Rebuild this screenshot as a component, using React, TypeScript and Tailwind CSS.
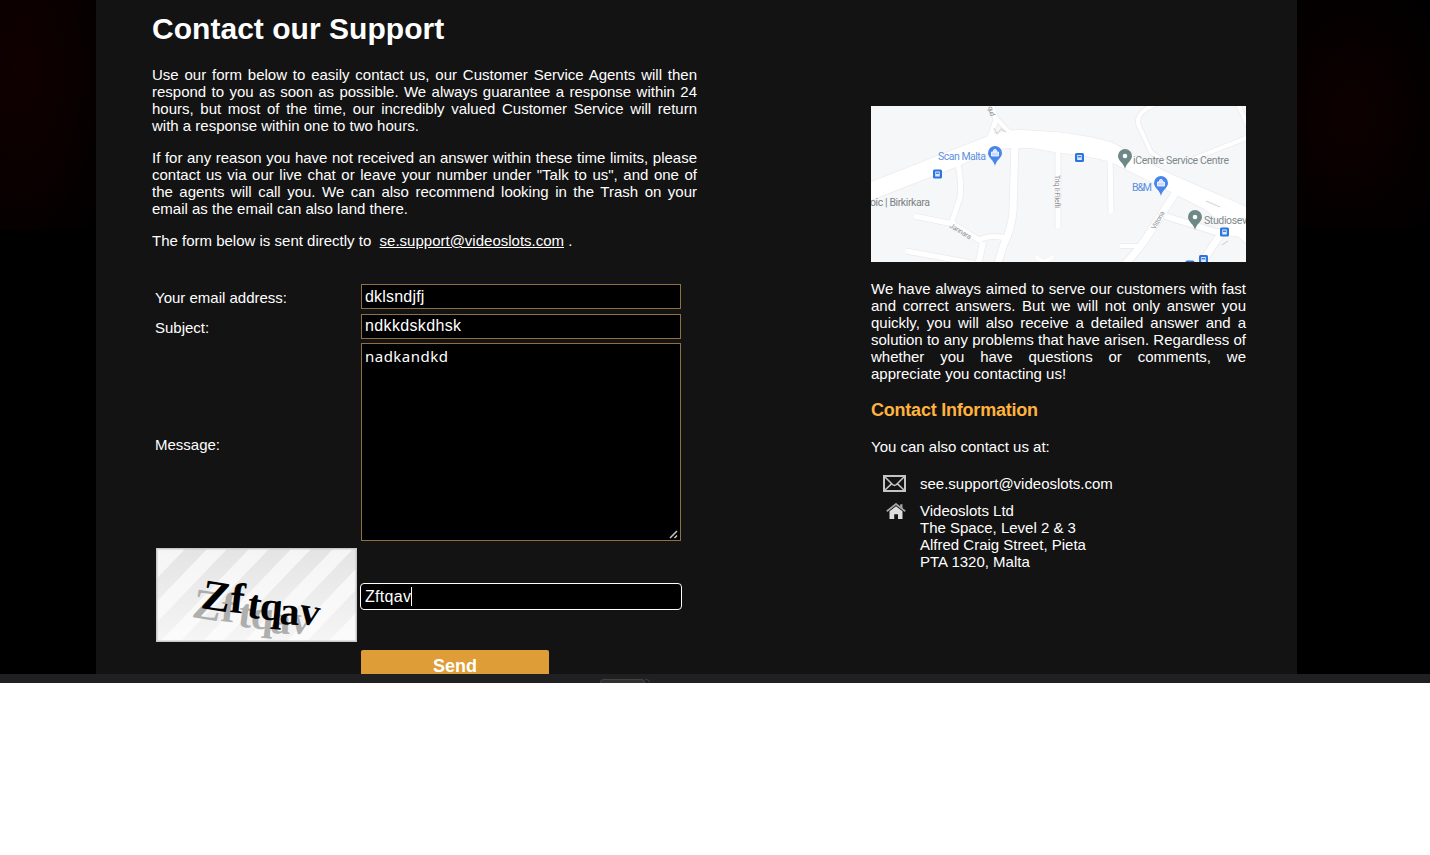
import React from "react";

const mainRoad =
  "M-5 78L115 31Q130 24 150 24L185 26Q220 30 242 37L295 66L380 103V141L335 104L302 87L240 56Q215 49 190 47L160 42H138Q125 43 112 49L85 61L-5 96Z";

const lanes = [
  { d: "M118 34L125 14L120 -4", w: 5 },
  { d: "M125 12L140 28", w: 4 },
  { d: "M87 58Q91 78 89 92L80 118", w: 5 },
  { d: "M43 110L82 118L108 134Q120 128 136 132", w: 5 },
  { d: "M35 145L112 159", w: 5 },
  { d: "M144 36L142 104Q141 122 133 138L126 160", w: 7 },
  { d: "M107 160L112 136", w: 6 },
  { d: "M187 42L187 122", w: 5 },
  { d: "M239 50L240 107", w: 5 },
  { d: "M305 86L274 134Q266 146 252 160", w: 7 },
  { d: "M249 140L270 140", w: 4 },
  { d: "M294 110L345 126L385 128", w: 6 },
  { d: "M350 128L328 160", w: 7 },
  { d: "M290 -4Q262 6 268 20L280 46L296 58", w: 4 },
  { d: "M322 53L380 30M366 -4L379 24", w: 4 },
];

function Pin({ x, y, color, bag }: { x: number; y: number; color: string; bag?: boolean }) {
  return (
    <g transform={`translate(${x} ${y})`}>
      <path d="M0 19C-1 13 -7 11 -7 6A7 7 0 0 1 7 6C7 11 1 13 0 19Z" fill={color} />
      {bag ? (
        <path
          d="M-3.5 5h7v4h-7z M-1.6 5V4a1.6 1.6 0 0 1 3.2 0V5"
          fill="#e9f1ff"
          fillOpacity=".8"
          stroke="#fff"
          strokeWidth=".8"
        />
      ) : (
        <circle cy="6" r="2.3" fill="#fff" />
      )}
    </g>
  );
}

function Stop({ x, y }: { x: number; y: number }) {
  return (
    <g transform={`translate(${x} ${y})`}>
      <rect x="-4.5" y="-4.5" width="9" height="9" rx="1.5" fill="#2f74dc" />
      <path d="M-2.3 -2.5h4.6v5h-4.6z" fill="#dceaff" />
      <path d="M-1.6 -.8h3.2" stroke="#2f74dc" strokeWidth="1.3" />
    </g>
  );
}

function StreetMap() {
  return (
    <svg viewBox="0 0 375 156" className="block h-[156px] w-[375px]" fontFamily="Roboto, sans-serif" fontSize="10.5">
      <rect width="375" height="156" fill="#f6f7f9" />
      <g fill="none" strokeLinejoin="round">
        {lanes.map((l) => (
          <path key={l.d} d={l.d} stroke="#ececee" strokeWidth={l.w + 1.6} />
        ))}
        <path d={mainRoad} stroke="#ececee" strokeWidth="1.6" />
        {lanes.map((l) => (
          <path key={l.d} d={l.d} stroke="#fff" strokeWidth={l.w} />
        ))}
        <path d={mainRoad} fill="#fff" />
        <path d="M335 95l14 6M351 139l6 -4M123 22l3 6 4-5 5 3" stroke="#d6d7d9" strokeWidth="1.2" />
        <path d="M165 151l8 5 9-5" stroke="#fff" strokeWidth="3" />
      </g>
      <text x="67" y="53.5" fill="#5a90e0" textLength="48">Scan Malta</text>
      <text x="-1" y="100" fill="#7b8184" textLength="60">oic | Birkirkara</text>
      <text x="262" y="57.5" fill="#7d8989" textLength="96">iCentre Service Centre</text>
      <text x="261" y="85" fill="#5a90e0" textLength="20">B&amp;M</text>
      <text x="333" y="118" fill="#7d8989" textLength="43">Studiosev</text>
      <g fill="#8f9294" fontSize="7">
        <text transform="translate(78 121) rotate(31)" textLength="24">Jannara</text>
        <text transform="translate(184 69) rotate(90)" textLength="33">Triq Il-Fliefli</text>
        <text transform="translate(284 124) rotate(-60)" textLength="20">Vittoria</text>
        <text transform="translate(117 1) rotate(75)" textLength="10">qud</text>
      </g>
      <Pin x={124} y={41} color="#4a86ea" bag />
      <Pin x={290} y={71} color="#4a86ea" bag />
      <Pin x={254} y={44} color="#6e8888" />
      <Pin x={324} y={105} color="#6e8888" />
      <Stop x={66.5} y={68} />
      <Stop x={208.5} y={51.5} />
      <Stop x={353.5} y={126} />
      <Stop x={332.5} y={153.5} />
      <Stop x={319} y={159} />
    </svg>
  );
}

const glyphs = [
  { c: "Z", x: 44, y: 60, s: 43, r: 9 },
  { c: "f", x: 73, y: 64, s: 43, r: 6 },
  { c: "t", x: 90, y: 69, s: 41, r: 8 },
  { c: "q", x: 103, y: 71, s: 41, r: 5 },
  { c: "a", x: 123, y: 76, s: 40, r: 3 },
  { c: "v", x: 142, y: 75, s: 40, r: 10 },
];

function CaptchaWord({ fill }: { fill: string }) {
  return (
    <g fill={fill} fontFamily="Liberation Serif, serif" fontWeight="bold">
      {glyphs.map((g) => (
        <text key={g.c} fontSize={g.s} transform={`translate(${g.x} ${g.y}) rotate(${g.r})`}>
          {g.c}
        </text>
      ))}
    </g>
  );
}

function Captcha() {
  return (
    <svg viewBox="0 0 201 94" className="block h-[94px] w-[201px]">
      <defs>
        <linearGradient id="fade" x1="0" y1="0" x2="0" y2="1">
          <stop offset="0" stopColor="#fff" stopOpacity="0" />
          <stop offset="1" stopColor="#fff" stopOpacity=".65" />
        </linearGradient>
      </defs>
      <rect width="201" height="94" fill="#f5f5f5" />
      <path
        d="M-60 94L30 0H52L-38 94Z M-18 94L72 0H94L4 94Z M24 94L114 0H136L46 94Z M66 94L156 0H178L88 94Z M108 94L198 0H220L130 94Z M150 94L240 0H262L172 94Z"
        fill="#e4e4e4"
      />
      <rect width="201" height="94" fill="url(#fade)" />
      <g transform="translate(-9 9)" opacity=".8">
        <CaptchaWord fill="#9d9d9d" />
      </g>
      <CaptchaWord fill="#000" />
      <rect x=".75" y=".75" width="199.5" height="92.5" fill="none" stroke="#c9c9c9" strokeWidth="1.5" />
    </svg>
  );
}

function Envelope() {
  return (
    <svg viewBox="0 0 23 17" className="h-[17px] w-[23px]" fill="none" stroke="#c4c4c4">
      <rect x="1" y="1" width="21" height="15" strokeWidth="2" />
      <path d="M2 2l7.5 7.5q2 1.8 4 0L21 2M2 15l6.5-6.2M21 15l-6.5-6.2" strokeWidth="1.6" />
    </svg>
  );
}

function House() {
  return (
    <svg viewBox="0 0 20 16" className="h-4 w-5">
      <path d="M.8 8.3L10 1l9.2 7.3" fill="none" stroke="#a4a4a4" strokeWidth="1.8" />
      <path d="M14.2 1.2h2.3v5l-2.3-2z" fill="#a4a4a4" />
      <path d="M3.5 8.3L10 3.3l6.5 5V16H12v-4.7H8.2V16H3.5z" fill="#dedede" />
    </svg>
  );
}

const field = "block w-[320px] border border-[#8d7044] bg-black px-[3px] text-base text-white outline-none";

export default function App() {
  return (
    <div className="h-[855px] bg-white font-['Liberation_Sans',Arial,sans-serif] text-[15px] leading-[17px] text-white">
      <div className="flex h-[674px] overflow-hidden bg-black">
        <div className="h-[230px] w-24 shrink-0 bg-[radial-gradient(ellipse_at_20%_30%,#100000_0%,#0a0000_50%,#000_100%)]" />
        <main className="flex w-[1201px] shrink-0 items-start justify-between bg-[#131313] pr-[51px] pl-14">
          <section className="w-[545px]">
            <h1 className="mt-3 h-[34px] text-[30px] leading-[34px] font-bold tracking-[0.03px]">
              Contact our Support
            </h1>
            <div className="mt-5 space-y-[15px] text-justify">
              <p>
                Use our form below to easily contact us, our Customer Service Agents will then respond to you as soon as
                possible. We always guarantee a response within 24 hours, but most of the time, our incredibly valued
                Customer Service will return with a response within one to two hours.
              </p>
              <p>
                If for any reason you have not received an answer within these time limits, please contact us via our
                live chat or leave your number under "Talk to us", and one of the agents will call you. We can also
                recommend looking in the Trash on your email as the email can also land there.
              </p>
              <p>
                The form below is sent directly to &nbsp;<a className="underline">se.support@videoslots.com</a> .
              </p>
            </div>

            <form className="mt-[35px] ml-[3px] grid grid-cols-[206px_322px] items-center">
              <label className="pt-0.5">Your email address:</label>
              <input className={`${field} h-[25px] tracking-[0.2px]`} defaultValue="dklsndjfj" />
              <label className="mt-[5px] pt-0.5">Subject:</label>
              <input className={`${field} mt-[5px] h-[25px] pb-0.5 tracking-[0.36px]`} defaultValue="ndkkdskdhsk" />
              <label className="pt-2">Message:</label>
              <div className="relative mt-1 w-[320px]">
                <textarea
                  className="block h-[198px] w-[320px] resize-none border border-[#8d7044] bg-black px-[3px] pt-0.5 font-['Noto_Sans',sans-serif] text-[15px] leading-[21px] tracking-[0.48px] text-white outline-none"
                  defaultValue="nadkandkd"
                />
                <svg
                  viewBox="0 0 9 9"
                  className="absolute right-[3px] bottom-[2px] size-[9px]"
                  stroke="#c8c8c8"
                  strokeWidth="1.5"
                >
                  <path d="M1 8L8 1M5.5 8L8 5.5" />
                </svg>
              </div>
              <div className="mt-[7px] ml-px">
                <Captcha />
              </div>
              <div className="relative mt-[9px] -ml-px">
                <input
                  className="block h-[27px] w-[322px] rounded-[4px] border-[1.5px] border-white bg-black px-1 pt-0.5 text-base tracking-[0.3px] text-white outline-none"
                  defaultValue="Zftqav"
                />
                <span className="absolute top-1 left-[51px] h-[19px] w-px bg-white" />
              </div>
              <button
                type="button"
                className="col-start-2 mt-2 h-8 w-[188px] rounded-[2px] bg-[#de9d36] text-lg leading-[32px] font-bold"
              >
                Send
              </button>
            </form>
          </section>

          <aside className="mt-[106px] w-[375px]">
            <StreetMap />
            <p className="mt-[18px] text-justify">
              We have always aimed to serve our customers with fast and correct answers. But we will not only answer you
              quickly, you will also receive a detailed answer and a solution to any problems that have arisen.
              Regardless of whether you have questions or comments, we appreciate you contacting us!
            </p>
            <h2 className="mt-[18px] text-[18px] leading-[21px] font-bold tracking-[-0.22px] text-[#ffb23e]">
              Contact Information
            </h2>
            <p className="mt-[17px]">You can also contact us at:</p>
            <div className="mt-5 grid grid-cols-[49px_auto] gap-y-[10px]">
              <div className="pl-3">
                <Envelope />
              </div>
              <p>see.support@videoslots.com</p>
              <div className="pt-px pl-[15px]">
                <House />
              </div>
              <address className="not-italic">
                Videoslots Ltd
                <br />
                The Space, Level 2 &amp; 3
                <br />
                Alfred Craig Street, Pieta
                <br />
                PTA 1320, Malta
              </address>
            </div>
          </aside>
        </main>
        <div className="h-[230px] flex-1 bg-[radial-gradient(ellipse_at_40%_50%,#0e0000_0%,#070000_50%,#000_100%)]" />
      </div>
      <div className="flex h-[9px] items-end overflow-hidden bg-[#202022] pl-[600px]">
        <div className="h-1 w-[45px] rounded-t-[4px] border border-b-0 border-[#414141] bg-[#303030]" />
        <div className="h-1 w-[5px] rounded-tr-[4px] border-t border-r border-[#3a3a3a]" />
      </div>
    </div>
  );
}
